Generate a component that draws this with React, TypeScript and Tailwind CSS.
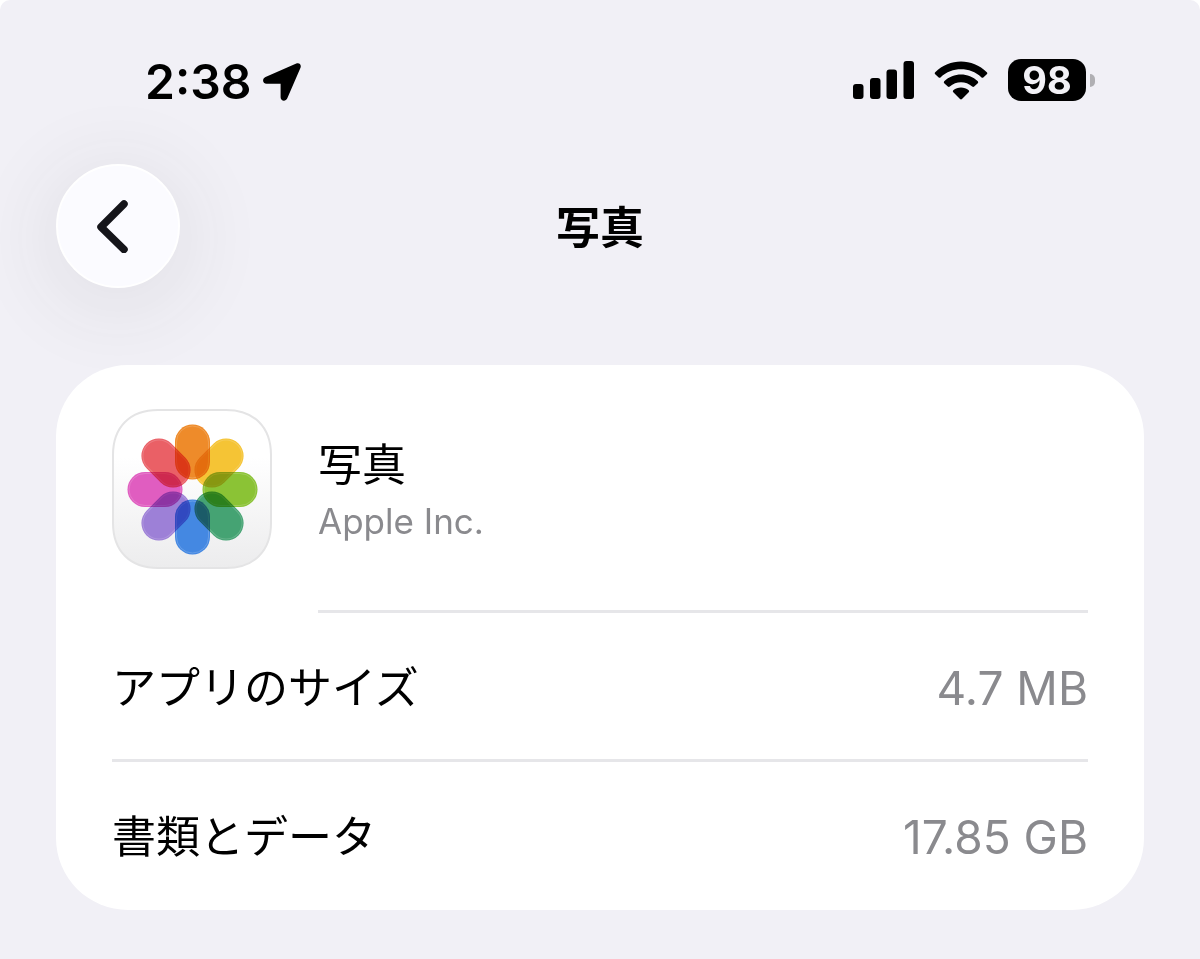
const petals = [
  { angle: 0, color: '#f28c28' },
  { angle: 45, color: '#f9c733' },
  { angle: 90, color: '#8bc634' },
  { angle: 135, color: '#42a574' },
  { angle: 180, color: '#4189e8' },
  { angle: 225, color: '#9e80dc' },
  { angle: 270, color: '#e35cc4' },
  { angle: 315, color: '#ee5f67' },
];

const rows = [
  { label: 'アプリのサイズ', value: '4.7 MB' },
  { label: '書類とデータ', value: '17.85 GB' },
];

function PhotosIcon() {
  return (
    <svg viewBox="0 0 160 160" className="size-40 shrink-0" aria-hidden="true">
      <defs>
        <linearGradient id="tile" x1="0" y1="0" x2="0" y2="1">
          <stop offset="0.3" stopColor="#ffffff" />
          <stop offset="1" stopColor="#ececed" />
        </linearGradient>
      </defs>
      <path
        d="M46 1H114C128 1 138 4 147 13C156 22 159 32 159 46V114C159 128 156 138 147 147C138 156 128 159 114 159H46C32 159 22 156 13 147C4 138 1 128 1 114V46C1 32 4 22 13 13C22 4 32 1 46 1Z"
        fill="url(#tile)"
        stroke="#e4e4e5"
        strokeWidth="2"
      />
      <g className="isolate">
        {petals.map((petal) => (
          <g
            key={petal.angle}
            className="mix-blend-multiply"
            transform={`rotate(${petal.angle} 80.5 80.5)`}
          >
            <rect x="63" y="15.5" width="35" height="55" rx="17.5" fill={petal.color} />
            <rect
              x="64.5"
              y="17"
              width="32"
              height="52"
              rx="16"
              fill="none"
              stroke="#ffffff"
              strokeOpacity="0.18"
              strokeWidth="1"
            />
          </g>
        ))}
      </g>
      {/* thin glass layer that mutes the overlaps */}
      <g fill="#9a7a6a" fillOpacity="0.04">
        {petals.map((petal) => (
          <rect
            key={petal.angle}
            x="63"
            y="15.5"
            width="35"
            height="55"
            rx="17.5"
            transform={`rotate(${petal.angle} 80.5 80.5)`}
          />
        ))}
      </g>
    </svg>
  );
}

function StatusBar() {
  return (
    <div className="flex h-[164px] items-center justify-between pr-[105px] pl-[145px]">
      <div className="flex items-center gap-3">
        <span className="text-[48px] leading-[60px] font-semibold">2:38</span>
        <svg viewBox="0 0 38 38" className="size-[38px]" aria-hidden="true">
          <path d="M33.3 .6C36.3-.6 38.6 1.8 37.5 4.7L24.3 35.3C22.7 39 17.6 38.2 17.6 34.2V20.7H3.6C-.5 20.7-1.2 15.5 2.5 13.9Z" />
        </svg>
      </div>
      <div className="flex items-center pb-1">
        <svg viewBox="0 0 61 38" className="mr-5 h-[38px] w-[61px]" aria-hidden="true">
          <rect x="0" y="23" width="10.5" height="15" rx="3" />
          <rect x="17" y="17" width="10.5" height="21" rx="3" />
          <rect x="33.5" y="8.5" width="10.5" height="29.5" rx="3" />
          <rect x="50.5" y="0" width="10.5" height="38" rx="3" />
        </svg>
        <svg viewBox="0 0 54 39" className="mr-5 h-[39px] w-[54px]" aria-hidden="true">
          <path d="M1.2 11.2C15.5-3 38.5-3 52.8 11.2Q53.8 12.2 52.8 13.2L49.3 16.4Q48.3 17.3 47.3 16.3C36 5.7 18 5.7 6.7 16.3Q5.7 17.3 4.7 16.4L1.2 13.2Q.2 12.2 1.2 11.2Z" />
          <path d="M10.2 20.2C19.5 11.2 34.5 11.2 43.8 20.2Q44.7 21.2 43.8 22.2L40.2 25.6Q39.2 26.5 38.2 25.6C31.9 19.8 22.1 19.8 15.8 25.6Q14.8 26.5 13.8 25.6L10.2 22.2Q9.3 21.2 10.2 20.2Z" />
          <path d="M19.3 29.2C23.7 25.5 30.3 25.5 34.7 29.2Q35.7 30.2 34.7 31.2L28 38Q27 38.9 26 38L19.3 31.2Q18.3 30.2 19.3 29.2Z" />
        </svg>
        <div className="flex h-[42px] w-[78px] items-center justify-center rounded-[13px] bg-black text-[38px] leading-[42px] font-bold text-[#f2f1f6]">
          98
        </div>
        <div className="ml-1 h-[13px] w-[5px] rounded-r-full bg-[#b0afb3]" />
      </div>
    </div>
  );
}

export default function App() {
  return (
    <div className="min-h-screen rounded-t-[10px] bg-[#f1f0f6] font-['Inter','Noto_Sans_CJK_JP',sans-serif] text-black">
      <StatusBar />

      <header className="grid grid-cols-[1fr_auto_1fr] items-center px-14">
        <button
          type="button"
          aria-label="戻る"
          className="flex size-[124px] items-center justify-center rounded-full border-2 border-white bg-[#fbfbff] shadow-[0_12px_80px_16px_rgba(50,50,60,0.07)]"
        >
          <svg viewBox="0 0 32 54" className="mr-3 h-[54px] w-8" fill="none" aria-hidden="true">
            <path
              d="M28 5 5 28 28 50.5"
              stroke="#15151a"
              strokeWidth="7.5"
              strokeLinecap="round"
              strokeLinejoin="round"
            />
          </svg>
        </button>
        <h1 className="pt-1 text-[44px] leading-[60px] font-bold">写真</h1>
      </header>

      <main className="relative px-14 pt-[77px] pb-12">
        <section className="rounded-[72px] bg-white px-14 pb-0.5">
          <div className="flex h-[245px] items-start gap-[46px] pt-11">
            <PhotosIcon />
            <div className="pt-[26px]">
              <h2 className="text-[44px] leading-[60px]">写真</h2>
              <p className="text-[35px] leading-[52px] text-[#8a8a8e]">Apple Inc.</p>
            </div>
          </div>
          <div className="ml-[206px] h-[3px] bg-[#e6e6e9]" />
          <dl className="divide-y-3 divide-[#e6e6e9]">
            {rows.map((row) => (
              <div
                key={row.label}
                className="flex items-center justify-between pt-[45px] pb-[41px] leading-[60px]"
              >
                <dt className="text-[44px]">{row.label}</dt>
                <dd className="text-[46px] text-[#8a8a8e]">{row.value}</dd>
              </div>
            ))}
          </dl>
        </section>
      </main>
    </div>
  );
}
